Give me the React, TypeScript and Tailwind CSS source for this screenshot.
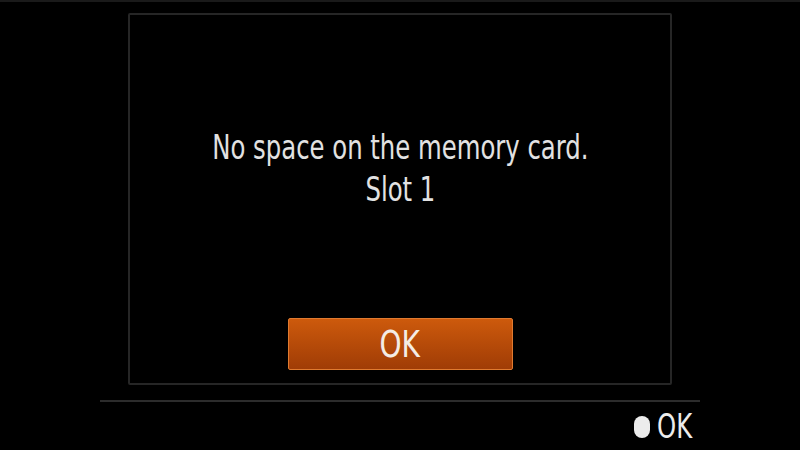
export default function App() {
  return (
    <div
      className="w-[800px] h-[450px] bg-black flex flex-col overflow-hidden"
      style={{ fontFamily: '"DejaVu Sans Condensed", "DejaVu Sans", sans-serif' }}
    >
      <div className="h-[2px] bg-[#1a1a1a] shrink-0" />
      <div className="flex justify-center pt-[11px]">
        <div className="w-[544px] h-[372px] border-2 border-[#262626] rounded-[2px] flex flex-col items-center">
          <div className="mt-[112px] text-[33px] leading-[42px] text-[#e2e2e2] text-center scale-x-[0.82]">
            <div className="whitespace-nowrap">No space on the memory card.</div>
            <div>Slot 1</div>
          </div>
          <div className="mt-auto mb-[13px] w-[225px] h-[52px] border border-[#e07a30] bg-gradient-to-b from-[#cd5a0c] to-[#a03c06] flex items-center justify-center rounded-[2px]">
            <span className="text-[38px] leading-none text-[#f4ece4] scale-x-[0.82]">OK</span>
          </div>
        </div>
      </div>
      <div className="mt-[15px] ml-[100px] w-[600px] h-[2px] bg-[#2c2c2c]" />
      <div className="flex items-center justify-end pr-[100px] pt-[8px] gap-[7px]">
        <div className="w-[16px] h-[22px] rounded-full bg-[#ececec]" />
        <span className="text-[33px] leading-none text-[#ececec] scale-x-[0.82] origin-left">OK</span>
      </div>
    </div>
  );
}
